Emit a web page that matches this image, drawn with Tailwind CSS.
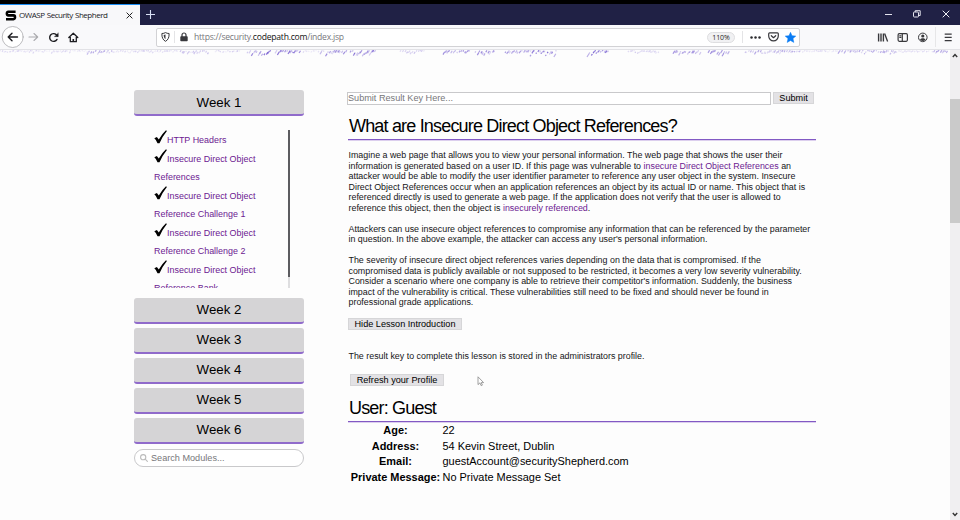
<!DOCTYPE html>
<html lang="en">
<head>
<meta charset="utf-8">
<title>OWASP Security Shepherd</title>
<script src="https://cdn.jsdelivr.net/npm/@tailwindcss/browser@4"></script>
</head>
<body class="w-[960px] h-[520px] overflow-hidden bg-[#fdfdfd] font-['Liberation_Sans',Arial,sans-serif] text-black flex flex-col">
<div class="h-1 bg-black shrink-0"></div>
<header class="h-[21px] shrink-0 flex bg-[#202145] font-['Open_Sans','Noto_Sans',sans-serif]">
  <div class="w-[140px] h-full bg-[#f8f8fa] border-t border-[#1b8df5] flex items-center pl-[5px]">
    <svg class="w-[12px] h-[11px] shrink-0" viewBox="0 0 12 11"><path d="M10.600 1.800H3.300C1.400 1.800 1.400 5.400 3.300 5.400h5.200c2 0 2 3.800 0 3.800H1" fill="none" stroke="#000" stroke-width="2.600"/></svg>
    <span class="ml-[2px] w-[100px] shrink-0 text-[8px] leading-none tracking-[-0.480px] [word-spacing:0.700px] whitespace-nowrap text-[#18181c]">OWASP Security Shepherd</span>
    <svg class="w-[7px] h-[7px] ml-[7px] shrink-0" viewBox="0 0 7 7"><path d="M.6.6l5.800 5.800M6.400.6L.6 6.400" stroke="#222" stroke-width="1"/></svg>
  </div>
  <svg class="w-[9px] h-[9px] mt-[6px] ml-[6px]" viewBox="0 0 9 9"><path d="M4.500 0v9M0 4.500h9" stroke="#d8e0f4" stroke-width="1.100"/></svg>
  <div class="ml-auto flex items-center pr-[10px] gap-[21px] pb-[1px]">
    <svg class="w-[7px] h-[8px]" viewBox="0 0 7 8"><path d="M0 4.500h7" stroke="#e4e4ee"/></svg>
    <svg class="w-[8px] h-[8px]" viewBox="0 0 8 8"><g fill="none" stroke="#e4e4ee"><rect x=".5" y="2" width="5" height="5" rx=".8"/><path d="M2.200 2V.7h5v4.800H5.800"/></g></svg>
    <svg class="w-[8px] h-[8px]" viewBox="0 0 8 8"><path d="M.7.7l6.600 6.600M7.300.7L.7 7.300" stroke="#f0f0f6"/></svg>
  </div>
</header>
<nav class="h-[25px] shrink-0 flex items-center bg-[#f9f9fb] border-b border-[#e2e2e6] font-['Open_Sans','Noto_Sans',sans-serif]">
  <svg class="w-[84px] h-[24px] shrink-0" viewBox="0 25 84 24" fill="none" stroke="#1c1c20" stroke-width="1.400" stroke-linecap="round" stroke-linejoin="round">
    <circle cx="12.700" cy="37" r="10.500" fill="#fff" stroke="#a9a9ad" stroke-width=".8"/>
    <path d="M17.500 37H8.200M12 33.200L8.200 37l3.800 3.800"/>
    <path d="M29 37h8.500M34 33.500l3.700 3.500-3.700 3.500" stroke="#aaaaae" stroke-width="1.100"/>
    <path d="M57 39.400a3.900 3.900 0 1 1-.7-4.700l1.100 1.200"/><path d="M58.300 33v3.700h-3.800z" fill="#1c1c20" stroke-width=".3"/>
    <path d="M68.800 37.500l4.500-4.200 4.500 4.200M70.300 37v4.700h6V37" stroke-width="1.300"/><path d="M73.300 39v2.500" stroke-width="1.600" stroke-linecap="butt"/>
  </svg>
  <div class="ml-[72px] w-[644px] h-[19px] shrink-0 bg-white border border-[#d2d2d5] rounded-[2px] flex items-center pl-[4px]">
    <svg class="w-[9px] h-[10px] shrink-0" viewBox="0 0 9 10" fill="none" stroke="#38383c"><path d="M.9 1.500Q3 1.500 4.500.6 6 1.500 8.100 1.500C8.300 5.500 7 8 4.500 9.300 2 8 .7 5.500.9 1.500z"/><path d="M4.500 2.600v4.600C3 6.200 2.700 4.500 2.700 3.100z" fill="#38383c" stroke="none"/></svg>
    <div class="w-px h-[12px] bg-[#e4e4e6] ml-[4px]"></div>
    <svg class="w-[8px] h-[10px] ml-[5px] shrink-0" viewBox="0 0 8 10"><rect x=".3" y="4.300" width="7.400" height="5" rx=".8" fill="#38383c"/><path d="M2 5V3a2 2 0 0 1 4 0v2" fill="none" stroke="#38383c" stroke-width="1.200"/></svg>
    <span class="ml-[6px] w-[513px] shrink-0 text-[8.600px] leading-none tracking-[-0.240px] text-[#77777b] whitespace-nowrap">https://security.<span class="text-[#111]">codepath.com</span>/index.jsp</span>
    <span class="w-[28px] h-[11px] shrink-0 rounded-full border border-[#dedee0] bg-[#f1f1f3] text-[7px] leading-[9px] tracking-[-0.100px] text-center text-[#222]">110%</span>
    <div class="w-px h-[12px] bg-[#e4e4e6] ml-[7px]"></div>
    <svg class="w-[11px] h-[3px] ml-[7px]" viewBox="0 0 11 3" fill="#2a2a2e"><circle cx="1.500" cy="1.500" r="1.250"/><circle cx="5.500" cy="1.500" r="1.250"/><circle cx="9.500" cy="1.500" r="1.250"/></svg>
    <svg class="w-[11px] h-[10px] ml-[7px]" viewBox="0 0 11 10" fill="none" stroke="#38383c" stroke-width="1.200" stroke-linecap="round" stroke-linejoin="round"><path d="M1.600.8h7.800q.9 0 .9.9v2.400a4.800 4.800 0 0 1-9.600 0V1.700q0-.9.900-.9zM3.300 3.700l2.200 2 2.200-2"/></svg>
    <svg class="w-[11px] h-[11px] ml-[6px]" viewBox="0 0 11 11"><path d="M5.500.3l1.500 3.400 3.800.4-2.800 2.500.8 3.800-3.300-1.900-3.300 1.900.8-3.800L.2 4.100 4 3.700z" fill="#0a7cf4" stroke="#0a7cf4" stroke-width=".5" stroke-linejoin="round"/></svg>
  </div>
  <svg class="w-[82px] h-[24px] ml-[77px] shrink-0" viewBox="877 25 82 24" fill="none" stroke="#38383c" stroke-width="1.200">
    <path d="M878.600 33.500v8M881 33.500v8M883.400 33.500v8" stroke-width="1.400"/><path d="M884.600 33.500l3 8" stroke-width="1.300"/>
    <rect x="898.100" y="33.700" width="9.300" height="7.600" rx="1.200"/><path d="M902.300 34v7M899.300 35.800h2M899.300 37.500h2"/>
    <circle cx="922.800" cy="37.400" r="4.300" stroke-width="1"/><circle cx="922.800" cy="36" r="1.600" fill="#38383c" stroke="none"/><path d="M920 39.900c.4-2.300 5.200-2.300 5.600 0q-2.800 2.300-5.600 0z" fill="#38383c" stroke="none"/>
    <path d="M935.500 27v20" stroke="#e6e6e8" stroke-width="1"/>
    <path d="M944.700 34.200h7M944.700 37.400h7M944.700 40.600h7"/>
  </svg>
</nav>
<div class="flex-1 flex relative">
  <svg id="spray" class="absolute left-0 top-0 w-[950px] h-[9px]" viewBox="0 0 950 9"></svg>
  <aside class="ml-[134px] w-[170px] pt-[40px] shrink-0 flex flex-col">
    <button class="h-[26px] shrink-0 rounded-[3px] bg-[#d5d4d6] border-b-2 border-[#906bcb] text-[13.300px] leading-[24px] pt-[1px]">Week 1</button>
    <div class="mt-[13px] h-[159px] w-[156px] pl-[20px] pt-[1px] overflow-hidden flex justify-between shrink-0">
      <div class="text-[8.950px] leading-[18.500px] text-[#6c2091] whitespace-nowrap">
        <div class="h-[19px] flex items-center"><svg class="w-[13px] h-[14px] -mt-[6px]" viewBox="0 0 13 14"><path d="M.3 8.200l2.600-1.300 1.900 2.500Q7.800 4 12 .2l.9.900Q8.500 6.500 5.500 13.200H3.500Q2.300 9.800.3 8.200z"/></svg><span class="pt-[1px]">HTTP Headers</span></div>
        <div class="h-[19px] flex items-center"><svg class="w-[13px] h-[14px] -mt-[6px]" viewBox="0 0 13 14"><path d="M.3 8.200l2.600-1.300 1.900 2.500Q7.800 4 12 .2l.9.900Q8.500 6.500 5.500 13.200H3.500Q2.300 9.800.3 8.200z"/></svg><span class="pt-[1px]">Insecure Direct Object</span></div>
        <div class="h-[18px]">References</div>
        <div class="h-[19px] flex items-center"><svg class="w-[13px] h-[14px] -mt-[6px]" viewBox="0 0 13 14"><path d="M.3 8.200l2.600-1.300 1.900 2.500Q7.800 4 12 .2l.9.900Q8.500 6.500 5.500 13.200H3.500Q2.300 9.800.3 8.200z"/></svg><span class="pt-[1px]">Insecure Direct Object</span></div>
        <div class="h-[18px]">Reference Challenge 1</div>
        <div class="h-[19px] flex items-center"><svg class="w-[13px] h-[14px] -mt-[6px]" viewBox="0 0 13 14"><path d="M.3 8.200l2.600-1.300 1.900 2.500Q7.800 4 12 .2l.9.900Q8.500 6.500 5.500 13.200H3.500Q2.300 9.800.3 8.200z"/></svg><span class="pt-[1px]">Insecure Direct Object</span></div>
        <div class="h-[18px]">Reference Challenge 2</div>
        <div class="h-[19px] flex items-center"><svg class="w-[13px] h-[14px] -mt-[6px]" viewBox="0 0 13 14"><path d="M.3 8.200l2.600-1.300 1.900 2.500Q7.800 4 12 .2l.9.900Q8.500 6.500 5.500 13.200H3.500Q2.300 9.800.3 8.200z"/></svg><span class="pt-[1px]">Insecure Direct Object</span></div>
        <div class="h-[18px]">Reference Bank</div>
      </div>
      <div class="w-[2px] bg-[#dedee0]"><div class="h-[147px] bg-[#5c5c60]"></div></div>
    </div>
    <div class="mt-[10px] flex flex-col gap-[4px] text-[13.300px] leading-[24px]">
      <button class="h-[26px] rounded-[3px] bg-[#d5d4d6] border-b-2 border-[#906bcb]">Week 2</button>
      <button class="h-[26px] rounded-[3px] bg-[#d5d4d6] border-b-2 border-[#906bcb]">Week 3</button>
      <button class="h-[26px] rounded-[3px] bg-[#d5d4d6] border-b-2 border-[#906bcb]">Week 4</button>
      <button class="h-[26px] rounded-[3px] bg-[#d5d4d6] border-b-2 border-[#906bcb]">Week 5</button>
      <button class="h-[26px] rounded-[3px] bg-[#d5d4d6] border-b-2 border-[#906bcb]">Week 6</button>
    </div>
    <div class="mt-[5px] h-[18px] rounded-full border border-[#c9c9cb] bg-white flex items-center pl-[5px] text-[9.150px] text-[#77777a]">
      <svg class="w-[8px] h-[8px] mr-[3px]" viewBox="0 0 8 8" fill="none" stroke="#bbb" stroke-width="1.100"><circle cx="3.200" cy="3.200" r="2.600"/><path d="M5.200 5.200l2.500 2.500"/></svg>
      <span class="pt-[1px]">Search Modules...</span>
    </div>
  </aside>
  <main class="ml-[43px] w-[469px] pt-[42px] text-[9.150px] leading-[10.500px] text-[#151517]">
    <div class="flex h-[13px]">
      <div class="w-[424px] h-[13px] border border-[#c9c9cb] bg-white text-[#77777a] leading-[11px]">Submit Result Key Here...</div>
      <button class="ml-[2px] w-[41px] h-[12px] bg-[#e3e2e5] border border-[#d6d6d8] text-black leading-[10px]">Submit</button>
    </div>
    <div class="ml-[1px] w-[468px]">
      <h2 class="mt-[9px] h-[26px] border-b border-[#8259c4] shadow-[0_1px_0_#dccfee] pl-[1px] text-[18px] leading-[24px] tracking-[-0.820px] text-black whitespace-nowrap">What are Insecure Direct Object References?</h2>
      <div class="mt-[10px] pl-[0.500px] whitespace-nowrap text-[8.890px]">
        <p>Imagine a web page that allows you to view your personal information. The web page that shows the user their<br>information is generated based on a user ID. If this page was vulnerable to <a class="text-[#6c2091]">insecure Direct Object References</a> an<br>attacker would be able to modify the user identifier parameter to reference any user object in the system. Insecure<br>Direct Object References occur when an application references an object by its actual ID or name. This object that is<br>referenced directly is used to generate a web page. If the application does not verify that the user is allowed to<br>reference this object, then the object is <a class="text-[#6c2091]">insecurely referenced</a>.</p>
        <p class="mt-[10.500px]">Attackers can use insecure object references to compromise any information that can be referenced by the parameter<br>in question. In the above example, the attacker can access any user's personal information.</p>
        <p class="mt-[10.500px]">The severity of insecure direct object references varies depending on the data that is compromised. If the<br>compromised data is publicly available or not supposed to be restricted, it becomes a very low severity vulnerability.<br>Consider a scenario where one company is able to retrieve their competitor's information. Suddenly, the business<br>impact of the vulnerability is critical. These vulnerabilities still need to be fixed and should never be found in<br>professional grade applications.</p>
      </div>
      <button class="block mt-[10px] w-[114px] h-[12px] bg-[#e3e2e5] border border-[#d6d6d8] text-black leading-[10px]">Hide Lesson Introduction</button>
      <p class="mt-[21px] pl-[0.500px] text-[8.890px]">The result key to complete this lesson is stored in the administrators profile.</p>
      <button class="block mt-[13px] ml-[2px] w-[94px] h-[12px] bg-[#e3e2e5] border border-[#d6d6d8] text-black leading-[10px]">Refresh your Profile</button>
      <h2 class="mt-[11px] h-[25px] border-b border-[#8259c4] shadow-[0_1px_0_#dccfee] pl-[1px] text-[18px] leading-[22px] tracking-[-0.820px] text-black">User: Guest</h2>
      <div class="mt-[1px] pl-[0.500px] grid grid-cols-[94px_1fr] auto-rows-[15.500px] text-[10.950px] leading-[15.500px] text-black whitespace-nowrap">
        <b class="text-center">Age:</b><span>22</span>
        <b class="text-center">Address:</b><span>54 Kevin Street, Dublin</span>
        <b class="text-center">Email:</b><span>guestAccount@securityShepherd.com</span>
        <b class="text-center">Private Message:</b><span>No Private Message Set</span>
      </div>
    </div>
  </main>
  <div class="ml-auto w-[10px] bg-[#f0eff1] flex flex-col items-center shrink-0">
    <svg class="w-[6px] h-[5px] mt-[3px]" viewBox="0 0 6 5"><path d="M.8 4L3 1.500 5.200 4" fill="none" stroke="#333" stroke-width="1.400"/></svg>
    <div class="mt-[41px] w-full h-[124px] bg-[#cacaca]"></div>
    <svg class="w-[6px] h-[5px] mt-auto mb-[3px]" viewBox="0 0 6 5"><path d="M.8 1L3 3.500 5.200 1" fill="none" stroke="#333" stroke-width="1.400"/></svg>
  </div>
  <svg class="absolute left-[477px] top-[326px] w-[8px] h-[11px]" viewBox="0 0 8 11"><path d="M1 .8v7.800l1.900-1.700 1.300 2.800 1.200-.6-1.200-2.500h2.400z" fill="#fff" stroke="#888" stroke-width=".8"/></svg>
</div>
<script>
// Paint spray along the lower edge of the page banner: [start, end, strength]
const bands = [[0,70,.3],[70,87,.2],[87,112,.6],[112,178,.3],[180,210,.5],[215,240,.35],[247,270,1],[275,300,1],[303,318,.25],[320,346,.8],[350,375,.9],[400,425,.45],[443,470,.75],[475,495,.8],[505,530,.7],[530,556,1],[587,608,1],[628,660,.4],[673,700,.8],[708,728,.8],[745,800,.6],[800,838,.25],[838,895,.6],[895,930,.3],[932,948,.7]];
let seed = 7, out = "";
const rnd = () => (seed = (seed * 16807) % 2147483647) / 2147483647;
for (const [a, b, s] of bands)
  for (let x = a; x < b; x += 1 + rnd() * 1.5) {
    const y = rnd() * rnd() * (1 + s * 4), l = 1 + rnd() * 2.5 * s;
    out += `<path d="M${x.toFixed(1)} ${(y + l).toFixed(1)}l${(l * .6).toFixed(1)} ${(-l).toFixed(1)}" stroke="#6a4fcc" stroke-width="1.200" stroke-opacity="${(s * (.25 + rnd() * .6)).toFixed(2)}"/>`;
  }
document.getElementById("spray").innerHTML = out;
</script>
</body>
</html>
